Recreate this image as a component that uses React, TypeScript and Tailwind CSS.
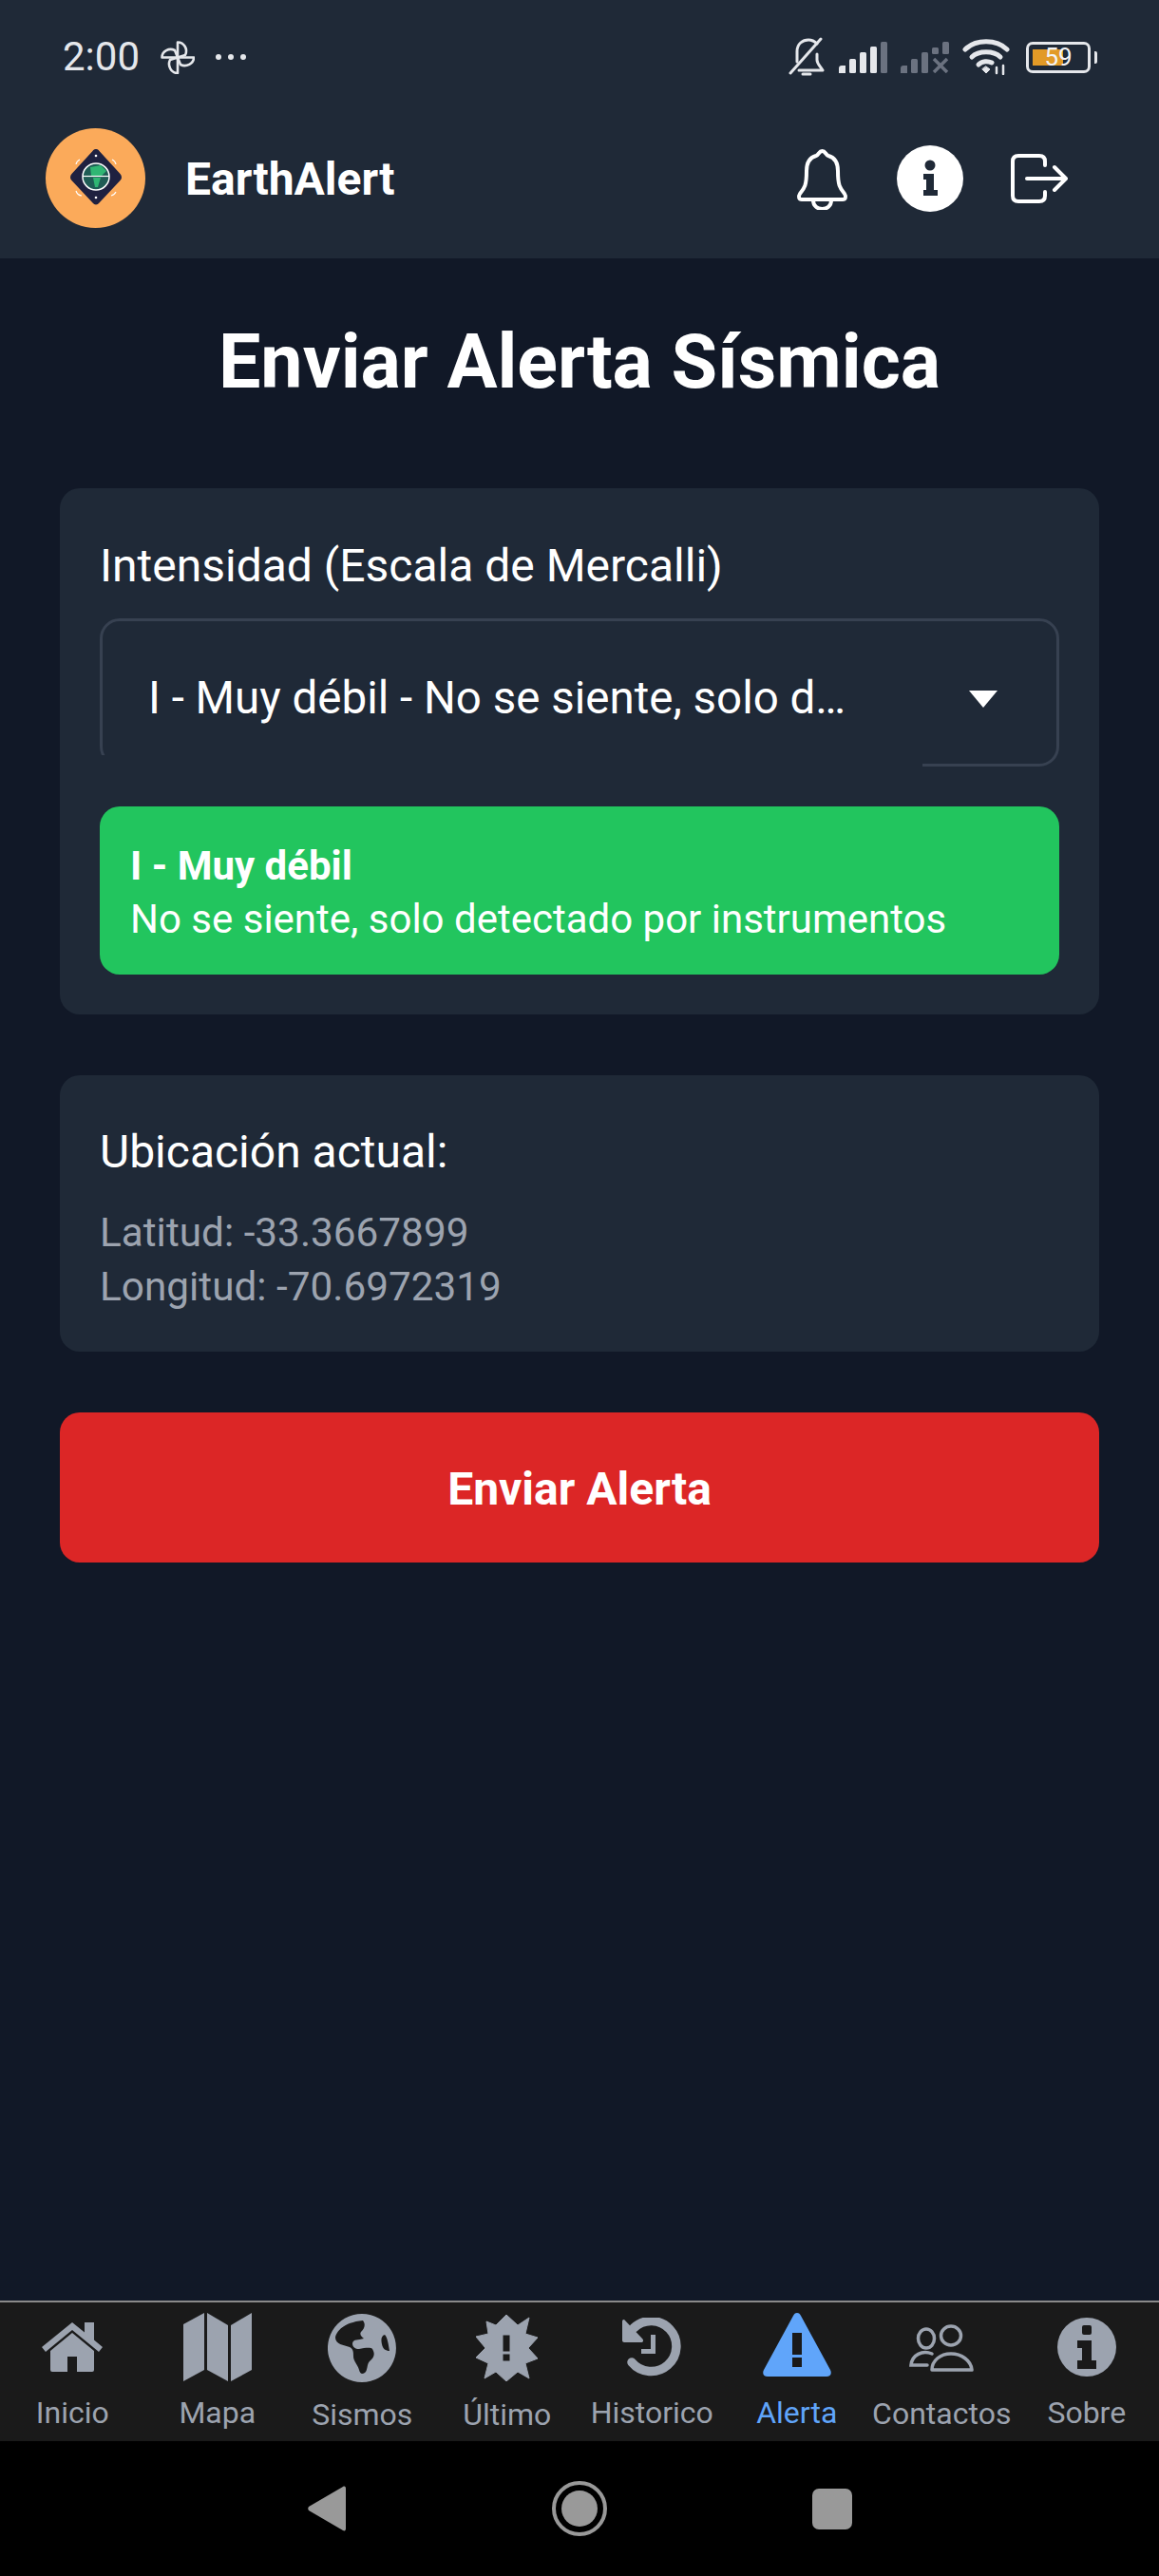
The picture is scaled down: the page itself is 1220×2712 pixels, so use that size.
function HomeIcon() {
  return (
    <svg width="64" height="52" viewBox="0 0 64 52" fill="#9ca3af">
      <path d="M32 0 L45 10.5 V0 H55 V18.5 L64 26 L60 31 L32 8 L4 31 L0 26 Z" />
      <path d="M32 11 L55 30 V50 a2 2 0 0 1 -2 2 H37 V36 H27 V52 H11 a2 2 0 0 1 -2 -2 V30 Z" />
    </svg>
  );
}

function MapIcon() {
  return (
    <svg width="72" height="72" viewBox="0 0 72 72" fill="#9ca3af">
      <path d="M0 12 L22 0 V60 L0 72 Z" />
      <path d="M25 0 L47 13 V72 L25 60 Z" />
      <path d="M50 13 L72 0 V60 L50 72 Z" />
    </svg>
  );
}

function GlobeIcon() {
  return (
    <svg width="72" height="72" viewBox="0 0 72 72" fill="#9ca3af">
      <path
        fillRule="evenodd"
        d="M36 0 A36 36 0 1 1 35.9 0 Z M8 25 C9 19 16 9 37 7 C40 11 39 15 35 19 C33 22 36 24 38 26 C32 28 27 26 26 31 C26 35 29 37 33 37 C39 36 45 35 47 37 C50 42 49 46 44 50 C41 53 42 60 39 62 C36 64 34 63 33 59 C32 54 27 50 27 45 C27 40 27 37 23 35 C17 33 8 32 8 25 Z M60 22 C63 25 64 33 65 39 C61 39 58 37 57 32 C56 28 56 23 60 22 Z"
      />
    </svg>
  );
}

function BurstIcon() {
  return (
    <svg width="65" height="70" viewBox="0 0 65 70" fill="#9ca3af">
      <path
        fillRule="evenodd"
        d="M32 0 L44 11 L56 3 L52 20 L65 24 L55 35 L65 46 L52 51 L56 67 L44 60 L32 70 L21 60 L9 67 L13 51 L0 45 L10 35 L0 23 L13 20 L11 7 L21 11 Z M28 21 H36 V39 H28 Z M28 41 H36 V49 H28 Z"
        stroke="#9ca3af"
        strokeWidth="1"
        strokeLinejoin="round"
      />
    </svg>
  );
}

function HistoryIcon() {
  return (
    <svg width="62" height="62" viewBox="0 0 62 62" fill="#9ca3af">
      <path d="M12 11 A26.5 26.5 0 1 1 10 47" fill="none" stroke="#9ca3af" strokeWidth="9.5" strokeLinecap="round" />
      <path d="M0 4 C0 2 2 1 3 3 L21 22 C23 24 22 26 20 26 H2 C1 26 0 25 0 24 Z" />
      <path d="M30 18 H35 V38 H20 V33 H30 Z" />
    </svg>
  );
}

function AlertIcon() {
  return (
    <svg width="72" height="67" viewBox="0 0 72 67" fill="#60a5fa">
      <path
        fillRule="evenodd"
        d="M36 0 C38 0 39 1 40 3 L71 60 C73 64 71 67 67 67 H5 C1 67 -1 64 1 60 L32 3 C33 1 34 0 36 0 Z M31 21 H41 V44 H31 Z M31 47 H41 V57 H31 Z"
      />
    </svg>
  );
}

function PeopleIcon() {
  return (
    <svg width="68" height="50" viewBox="0 0 68 50" fill="none" stroke="#9ca3af" strokeWidth="3.5">
      <ellipse cx="18" cy="15" rx="8.5" ry="10" />
      <ellipse cx="44" cy="12" rx="10.5" ry="10" />
      <path d="M24 31 C14 27 3 32 2 43 H19" strokeLinecap="round" />
      <path d="M24 48 C24 38 33 31 44 31 C55 31 65 38 66 48 Z" strokeLinejoin="round" />
    </svg>
  );
}

function InfoIcon() {
  return (
    <svg width="62" height="62" viewBox="0 0 62 62">
      <circle cx="31" cy="31" r="31" fill="#9ca3af" />
      <rect x="26" y="8" width="10" height="10" rx="2" fill="#1a1a1a" />
      <path d="M21 24 H36 V45 H41 V54 H21 V45 H26 V32 H21 Z" fill="#1a1a1a" />
    </svg>
  );
}

function HeaderInfoIcon() {
  return (
    <svg width="70" height="70" viewBox="0 0 70 70">
      <circle cx="35" cy="35" r="35" fill="#fff" />
      <circle cx="35" cy="21" r="5.5" fill="#1f2937" />
      <path d="M28 30 H39 V47 H43 V53 H28 V47 H31 V36 H28 Z" fill="#1f2937" />
    </svg>
  );
}

function Logo() {
  return (
    <svg width="105" height="105" viewBox="0 0 105 105" className="shrink-0">
      <circle cx="52.5" cy="52.5" r="52.5" fill="#fbaa5a" />
      <path
        d="M53 22 C54.5 22 55.5 22.5 56.5 24 L78.5 48 C80.5 50.5 80.5 53 78.5 55 L56.5 78.5 C54.5 81 51.5 81 49.5 78.5 L27.5 55 C25.5 53 25.5 50.5 27.5 48 L49.5 24 C50.5 22.5 51.5 22 53 22 Z"
        fill="#1f2140"
      />
      <circle cx="53" cy="51" r="14" fill="#1f5c55" stroke="#fff" strokeWidth="1.5" />
      <path d="M47 41 L58 39 L64 45 L59 50 H48 Z M50 52 H58 L55 62 H52 Z" fill="#2fb673" />
      <path d="M39 50.5 H67" stroke="#fff" strokeWidth="1.2" />
      <g fill="none" stroke="#fff" strokeWidth="1.2">
        <path d="M32 38 A7 7 0 0 1 36 33" />
        <path d="M70 33 A7 7 0 0 1 74 38" />
        <path d="M32 66 A7 7 0 0 0 38 71" />
        <path d="M69 71 A7 7 0 0 0 74 67" />
      </g>
      <circle cx="53" cy="29" r="1.3" fill="#fff" />
      <circle cx="53" cy="73" r="1.3" fill="#fff" />
    </svg>
  );
}

function Pinwheel() {
  return (
    <svg width="36" height="35" viewBox="0 0 36 35" fill="none" stroke="#e5e7eb" strokeWidth="2.6" strokeLinejoin="round">
      <path d="M18 17.5 V1.5 C25 1.5 29 9 26 15 Z" />
      <path d="M18 17.5 H35 C35 24 27 28 21 25 Z" />
      <path d="M18 17.5 V34 C11 34 7 26 10 20 Z" />
      <path d="M18 17.5 H1.5 C1.5 11 9 7 15 10 Z" />
    </svg>
  );
}

function SignalOn() {
  return (
    <svg width="51" height="33" viewBox="0 0 51 33" fill="#e5e7eb">
      <path d="M0 33 V28 Q0 25 3 25 H7 V33 Z" />
      <rect x="11" y="18" width="7" height="15" rx="1.5" />
      <rect x="22" y="11" width="7" height="22" rx="1.5" />
      <rect x="33" y="5" width="7" height="28" rx="1.5" />
      <rect x="44" y="0" width="7" height="33" rx="1.5" fill="#6b7280" />
    </svg>
  );
}

function SignalOff() {
  return (
    <svg width="51" height="33" viewBox="0 0 51 33" fill="#6b7280">
      <path d="M0 33 V28 Q0 25 3 25 H7 V33 Z" />
      <rect x="11" y="18" width="7" height="15" rx="1.5" />
      <rect x="22" y="11" width="7" height="22" rx="1.5" />
      <rect x="33" y="6" width="7" height="7" rx="1.5" />
      <rect x="44" y="0" width="7" height="13" rx="1.5" />
      <path d="M35 18 L49 32 M49 18 L35 32" stroke="#6b7280" strokeWidth="3.5" fill="none" />
    </svg>
  );
}

function StatusBar() {
  return (
    <div className="h-[120px] flex items-center pl-[66px] pr-[72px] text-[#e5e7eb]">
      <span className="text-[42px] leading-none">2:00</span>
      <div className="ml-[22px]">
        <Pinwheel />
      </div>
      <div className="ml-[22px] flex gap-[7px]">
        <div className="w-[6px] h-[6px] rounded-full bg-[#e5e7eb]" />
        <div className="w-[6px] h-[6px] rounded-full bg-[#e5e7eb]" />
        <div className="w-[6px] h-[6px] rounded-full bg-[#e5e7eb]" />
      </div>
      <div className="ml-auto flex items-center">
        <svg width="38" height="42" viewBox="0 0 38 42" fill="none" stroke="#e5e7eb" strokeWidth="3" strokeLinecap="round" strokeLinejoin="round">
          <path d="M9 26 V15 C9 7 15 3 21 3 C25 3 28 5 30 7" />
          <path d="M30 18 V24 C30 28 33 30 36 35 H11" />
          <path d="M34 2 L2 38" />
          <path d="M15 39 H23" />
        </svg>
        <div className="ml-[15px]">
          <SignalOn />
        </div>
        <div className="ml-[14px]">
          <SignalOff />
        </div>
        <svg width="50" height="38" viewBox="0 0 50 38" fill="none" stroke="#e5e7eb" strokeWidth="5" strokeLinecap="round" className="ml-[14px]">
          <path d="M3 11 C14 0 36 0 47 11" />
          <path d="M10 19 C17 12 33 12 40 19" />
          <path d="M17 27 C21 23 27 23 31 25" />
          <path d="M21 32 L25 36 L29 32 L25 29 Z" fill="#e5e7eb" strokeWidth="1" />
          <path d="M36 30 V36 M43 28 V37" strokeWidth="2.5" />
        </svg>
        <div className="ml-[17px] relative w-[68px] h-[33px] rounded-[7px] border-[3px] border-[#e5e7eb]">
          <div className="absolute left-[4px] top-[5px] bottom-[5px] w-[32px] bg-[#e29a27]" />
          <span className="absolute inset-0 flex items-center justify-center text-[26px] leading-none text-[#f3f4f6]">59</span>
          <div className="absolute right-[-10px] top-[7px] h-[13px] w-[3px] rounded-r-[2px] bg-[#e5e7eb]" />
        </div>
      </div>
    </div>
  );
}

function Header() {
  return (
    <div className="h-[152px] flex items-start pl-[48px] pr-[96px] pt-[15px]">
      <Logo />
      <span className="ml-[42px] mt-[28px] text-[48px] leading-[52px] font-bold text-white">EarthAlert</span>
      <div className="ml-auto flex items-start">
        <svg width="55" height="64" viewBox="0 0 55 64" fill="none" stroke="#fff" strokeWidth="4" strokeLinejoin="round" className="mt-[22px]">
          <path d="M27.5 2 C31 2 31 6 34 7 C41 9 44 15 44 23 C44 38 46 41 51 47 C53 50 52 53 49 53 H6 C3 53 2 50 4 47 C9 41 11 38 11 23 C11 15 14 9 21 7 C24 6 24 2 27.5 2 Z" />
          <path d="M18 54 C18 66 37 66 37 54" />
        </svg>
        <div className="ml-[51px] mt-[18px]">
          <HeaderInfoIcon />
        </div>
        <svg width="60" height="52" viewBox="0 0 60 52" fill="none" stroke="#fff" strokeWidth="4" strokeLinecap="round" strokeLinejoin="round" className="ml-[50px] mt-[27px]">
          <path d="M36 12 V8 C36 4 34 2 30 2 H8 C4 2 2 4 2 8 V44 C2 48 4 50 8 50 H30 C34 50 36 48 36 44 V40" />
          <path d="M17 26 H57" />
          <path d="M46 14 L58 26 L46 38" />
        </svg>
      </div>
    </div>
  );
}

const tabs = [
  { label: "Inicio", icon: <HomeIcon />, box: "pt-[21px] h-[97px]" },
  { label: "Mapa", icon: <MapIcon />, box: "pt-[11px] h-[97px]" },
  { label: "Sismos", icon: <GlobeIcon />, box: "pt-[12px] h-[99px]" },
  { label: "Último", icon: <BurstIcon />, box: "pt-[13px] h-[99px]" },
  { label: "Historico", icon: <HistoryIcon />, box: "pt-[16px] h-[97px]" },
  { label: "Alerta", icon: <AlertIcon />, box: "pt-[11px] h-[97px]", active: true },
  { label: "Contactos", icon: <PeopleIcon />, box: "pt-[23px] h-[98px]" },
  { label: "Sobre", icon: <InfoIcon />, box: "pt-[16px] h-[97px]" },
];

export default function App() {
  return (
    <div className="h-[2712px] w-[1220px] flex flex-col bg-[#111827] text-white font-['Roboto',sans-serif] overflow-hidden">
      <div className="bg-[#1f2937]">
        <StatusBar />
        <Header />
      </div>

      <main className="flex-1 px-[63px] pt-[59px]">
        <h1 className="text-[79px] leading-[100px] font-bold text-center">Enviar Alerta Sísmica</h1>

        {/* Intensity */}
        <section className="mt-[83px] bg-[#1f2937] rounded-[21px] px-[42px] pt-[42px] pb-[42px]">
          <label className="block text-[48px] leading-[80px]">Intensidad (Escala de Mercalli)</label>
          <div className="relative mt-[15px] h-[156px] rounded-[21px] border-[3px] border-[#374151] flex items-center pt-[14px] pl-[48px] pr-[62px]">
            <span className="flex-1 text-[47.5px] truncate">I - Muy débil - No se siente, solo d…</span>
            <svg width="30" height="18" viewBox="0 0 30 18">
              <path d="M0 0 H30 L15 18 Z" fill="#fff" />
            </svg>
            <div className="absolute left-[-3px] bottom-[-3px] w-[866px] h-[12px] bg-[#1f2937]" />
          </div>
          <div className="mt-[42px] h-[177px] bg-[#22c55e] rounded-[21px] px-[32px] pt-[35px]">
            <p className="text-[42px] leading-[56px] font-bold">I - Muy débil</p>
            <p className="text-[42px] leading-[56px]">No se siente, solo detectado por instrumentos</p>
          </div>
        </section>

        {/* Location */}
        <section className="mt-[64px] bg-[#1f2937] rounded-[21px] px-[42px] pt-[41px] pb-[40px]">
          <p className="text-[48px] leading-[80px]">Ubicación actual:</p>
          <p className="mt-[16px] text-[42.3px] leading-[57px] text-[#9ca3af]">Latitud: -33.3667899</p>
          <p className="text-[42.3px] leading-[57px] text-[#9ca3af]">Longitud: -70.6972319</p>
        </section>

        <button className="mt-[64px] w-full h-[158px] pt-[3px] bg-[#dc2626] rounded-[21px] text-[48px] font-bold">Enviar Alerta</button>
      </main>

      {/* Tabs */}
      <nav className="h-[148px] bg-[#1a1a1a] border-t-[2px] border-[#8a8a8a] grid grid-cols-8">
        {tabs.map((tab) => (
          <div key={tab.label} className="flex flex-col items-center">
            <div className={`flex justify-center ${tab.box}`}>{tab.icon}</div>
            <span className={`text-[32px] leading-[38px] whitespace-nowrap ${tab.active ? "text-[#60a5fa]" : "text-[#9ca3af]"}`}>
              {tab.label}
            </span>
          </div>
        ))}
      </nav>

      {/* Android nav */}
      <div className="h-[142px] bg-black flex justify-center items-center">
        <div className="w-[266px] flex justify-center">
          <svg width="40" height="48" viewBox="0 0 40 48">
            <path d="M37 1 C39 0 40 1 40 3 V45 C40 47 39 48 37 47 L1 26 C0 25 0 23 1 22 Z" fill="#999" />
          </svg>
        </div>
        <div className="w-[266px] flex justify-center">
          <div className="w-[58px] h-[58px] rounded-full border-[4px] border-[#999] flex items-center justify-center">
            <div className="w-[38px] h-[38px] rounded-full bg-[#999]" />
          </div>
        </div>
        <div className="w-[266px] flex justify-center">
          <div className="w-[42px] h-[43px] rounded-[7px] bg-[#999]" />
        </div>
      </div>
    </div>
  );
}
